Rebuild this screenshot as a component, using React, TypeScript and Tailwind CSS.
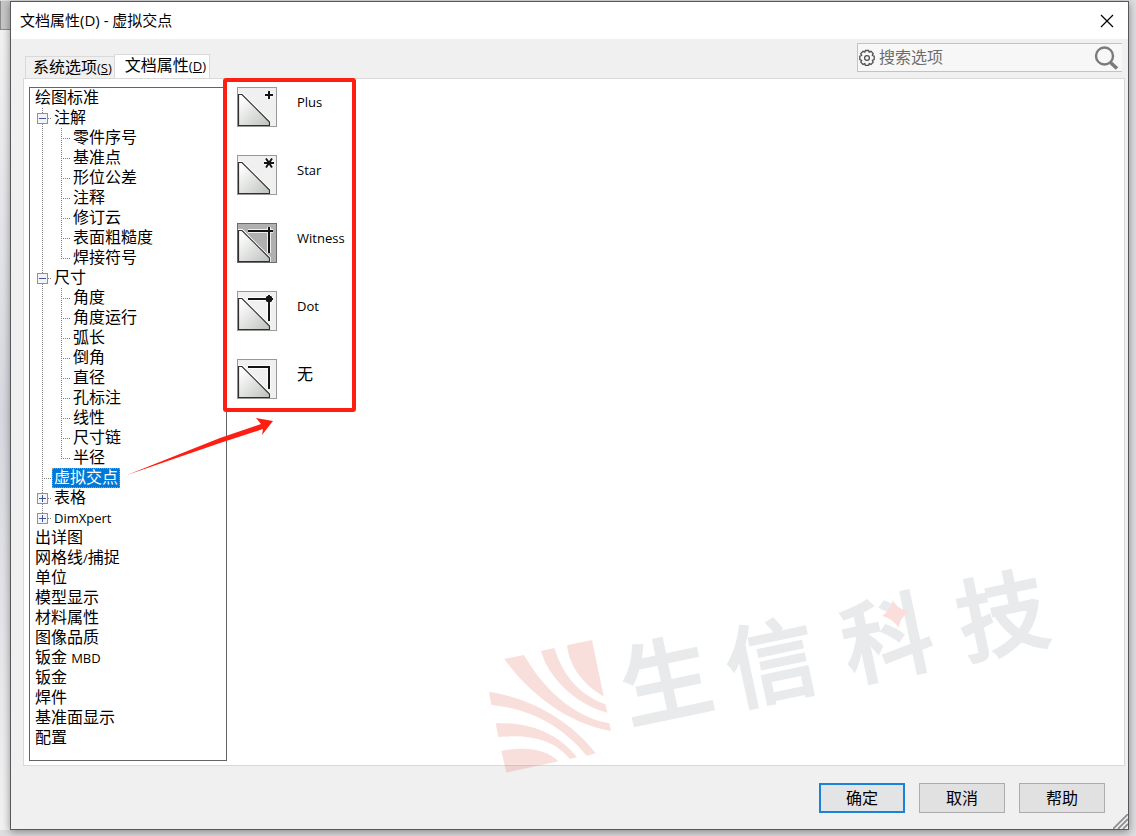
import React, { useState } from 'react';
import { clsx } from 'clsx';

type TreeNode = {
  label: string;
  expanded?: boolean;
  children?: TreeNode[];
};

const ROOT_TOP: TreeNode = { label: '绘图标准' };

const STANDARD_NODES: TreeNode[] = [
  {
    label: '注解',
    expanded: true,
    children: [
      { label: '零件序号' },
      { label: '基准点' },
      { label: '形位公差' },
      { label: '注释' },
      { label: '修订云' },
      { label: '表面粗糙度' },
      { label: '焊接符号' },
    ],
  },
  {
    label: '尺寸',
    expanded: true,
    children: [
      { label: '角度' },
      { label: '角度运行' },
      { label: '弧长' },
      { label: '倒角' },
      { label: '直径' },
      { label: '孔标注' },
      { label: '线性' },
      { label: '尺寸链' },
      { label: '半径' },
    ],
  },
  { label: '虚拟交点' },
  { label: '表格', children: [] },
  { label: 'DimXpert', children: [] },
];

const ROOT_REST = [
  '出详图',
  '网格线/捕捉',
  '单位',
  '模型显示',
  '材料属性',
  '图像品质',
  '钣金 MBD',
  '钣金',
  '焊件',
  '基准面显示',
  '配置',
];

type MarkKind = 'plus' | 'star' | 'witness' | 'dot' | 'none';

const MARKS: { kind: MarkKind; label: string }[] = [
  { kind: 'plus', label: 'Plus' },
  { kind: 'star', label: 'Star' },
  { kind: 'witness', label: 'Witness' },
  { kind: 'dot', label: 'Dot' },
  { kind: 'none', label: '无' },
];

const MARK_PATHS: Record<MarkKind, string> = {
  plus: 'M28 8H36M32 4V12',
  star: 'M27 8H37M29 3.5L35 12.5M35 3.5L29 12.5',
  witness: 'M11 8H36M32 4V30',
  dot: 'M11 8H36M32 4V30',
  none: 'M11 8H32V30',
};

// Latin runs are set smaller than the Chinese text around them
const MixedText = ({ text }: { text: string }) => (
  <>
    {text.split(/([A-Za-z/]+)/).map((part, i) =>
      /[A-Za-z/]/.test(part) ? (
        <span key={i} className="text-[13px]">{part}</span>
      ) : (
        part
      )
    )}
  </>
);

const Guide = ({ branch, last, wide }: { branch: boolean; last?: boolean; wide?: boolean }) => {
  const x = wide ? 12 : 9;
  return (
    <svg
      className={clsx('h-5 shrink-0', wide ? 'w-[22px]' : 'w-[19px]')}
      stroke="#808080"
      strokeDasharray="1 1"
      shapeRendering="crispEdges"
    >
      <path d={`M${x + 0.5} 0V${last ? 11 : 20}`} />
      {branch && <path d={`M${x} 10.5H${x + 9}`} />}
    </svg>
  );
};

const Toggle = ({ open, last, onClick, label }: { open: boolean; last: boolean; onClick: () => void; label: string }) => (
  <button onClick={onClick} aria-label={label} aria-expanded={open} className="h-5 w-[22px] shrink-0">
    <svg className="h-5 w-[22px]" shapeRendering="crispEdges">
      <g stroke="#808080" strokeDasharray="1 1">
        <path d={`M12.5 0V${last ? 11 : 20}`} />
        <path d="M12 10.5H22" />
      </g>
      <rect x="7.5" y="5.5" width="10" height="10" rx="1" fill="#f4f4f4" stroke="#919191" />
      <path d={open ? 'M9 10.5H16' : 'M9 10.5H16M12.5 7V14'} stroke="#3c56a6" />
    </svg>
  </button>
);

type RowLabelProps = {
  label: string;
  selected: boolean;
  onSelect: (label: string) => void;
};

const RowLabel = ({ label, selected, onSelect }: RowLabelProps) => (
  <button
    onClick={() => onSelect(label)}
    className={clsx(
      'flex h-5 items-start px-[2px] leading-[18px] whitespace-pre',
      selected && 'bg-[#0078d7] text-white outline-1 -outline-offset-1 outline-dotted outline-[#d98a3c]'
    )}
  >
    <span>
      <MixedText text={label} />
    </span>
  </button>
);

const OptionTree = () => {
  const [selected, setSelected] = useState('虚拟交点');
  const [nodes, setNodes] = useState(STANDARD_NODES);

  const toggle = (label: string) =>
    setNodes(nodes.map((n) => (n.label === label ? { ...n, expanded: !n.expanded } : n)));

  return (
    <nav className="w-[198px] shrink-0 border border-[#646464] bg-white text-base">
      <ul>
        <li className="flex pl-[3px]">
          <RowLabel label={ROOT_TOP.label} selected={selected === ROOT_TOP.label} onSelect={setSelected} />
        </li>
        {nodes.map((node, i) => {
          const last = i === nodes.length - 1;
          return (
            <li key={node.label}>
              <div className="flex">
                {node.children ? (
                  <Toggle open={!!node.expanded} last={last} label={node.label} onClick={() => toggle(node.label)} />
                ) : (
                  <Guide wide branch last={last} />
                )}
                <RowLabel label={node.label} selected={selected === node.label} onSelect={setSelected} />
              </div>
              {node.expanded && (
                <ul>
                  {node.children?.map((child, j) => (
                    <li key={child.label} className="flex">
                      <Guide wide branch={false} />
                      <Guide branch last={j === node.children!.length - 1} />
                      <RowLabel label={child.label} selected={selected === child.label} onSelect={setSelected} />
                    </li>
                  ))}
                </ul>
              )}
            </li>
          );
        })}
        {ROOT_REST.map((label) => (
          <li key={label} className="flex pl-[3px]">
            <RowLabel label={label} selected={selected === label} onSelect={setSelected} />
          </li>
        ))}
      </ul>
    </nav>
  );
};

const MarkIcon = ({ kind, active }: { kind: MarkKind; active: boolean }) => (
  <svg viewBox="0 0 40 40" className="size-10">
    <defs>
      <linearGradient id={`face-${kind}`} x1="0" y1="0" x2="1" y2="1">
        <stop offset="0.1" stopColor="#ffffff" />
        <stop offset="0.9" stopColor="#c4c8c4" />
      </linearGradient>
    </defs>
    <rect width="40" height="40" fill={active ? '#b0b0b0' : '#f0f0f0'} />
    <path d="M1.5 7.5H5L32.5 35V38.5H1.5Z" fill="none" stroke="#ffffff" strokeWidth="3" />
    <rect x="0.5" y="0.5" width="39" height="39" fill="none" stroke={active ? '#6b6b6b' : '#999999'} />
    <path d="M1.5 7.5H5L32.5 35V38.5H1.5Z" fill={`url(#face-${kind})`} stroke="#303030" strokeWidth="1.2" />
    <path d={MARK_PATHS[kind]} fill="none" stroke="#ffffff" strokeWidth="4" opacity="0.8" />
    <path d={MARK_PATHS[kind]} fill="none" stroke="#141414" strokeWidth="2" />
    {kind === 'star' && <path d="M30 6H34V10H30Z" fill="#141414" />}
    {kind === 'dot' && <path d="M30 5H34L35 6V10L34 11H30L29 10V6Z" fill="#141414" />}
  </svg>
);

const MarkList = () => {
  const [active, setActive] = useState<MarkKind>('witness');

  return (
    <div className="relative ml-[10px] self-start">
      <ul className="flex flex-col gap-7">
        {MARKS.map(({ kind, label }) => (
          <li key={kind} className="flex gap-5">
            <button id={`mark-${kind}`} aria-pressed={active === kind} onClick={() => setActive(kind)} className="size-10">
              <MarkIcon kind={kind} active={active === kind} />
            </button>
            <label
              htmlFor={`mark-${kind}`}
              className={clsx('w-[55px] leading-[30px]', kind === 'none' ? 'text-base' : 'text-[13px]')}
            >
              {label}
            </label>
          </li>
        ))}
      </ul>
      {/* Highlight frame and pointer */}
      <div className="pointer-events-none absolute -top-[9px] -bottom-[13px] -left-[14px] w-[133px] rounded-[3px] border-4 border-[#ff1e12]" />
      <svg viewBox="0 0 150 60" className="pointer-events-none absolute top-full -left-[112px] mt-[17px] h-[60px] w-[150px]" fill="#ff1e12">
        <path d="M2 59L95 22L136 8L131 2L148 5L137 19L138 13L95 27Z" />
      </svg>
    </div>
  );
};

const Watermark = () => (
  <svg
    viewBox="0 0 620 285"
    className="pointer-events-none absolute right-[24px] -bottom-[15px] h-[285px] w-[620px] overflow-visible"
    aria-hidden="true"
  >
    <g transform="translate(0 70)">
      <g fill="#e04632" opacity="0.17" transform="translate(0 -5) scale(0.33333)">
        <path d="M73 297L132 285C180 370 270 470 388 490L393 513C250 490 130 380 73 297Z" />
        <path d="M183 273L223 264C250 350 300 405 376 433L382 458C280 430 205 350 183 273Z" />
        <path d="M261 256L336 240L371 409C310 375 268 320 261 256Z" />
        <path d="M27 395C150 415 270 480 347 580L320 587C250 500 150 445 34 435Z" />
        <path d="M47 490C140 485 230 515 291 592L270 597C220 535 140 522 55 531Z" />
        <path d="M64 573C130 560 195 565 235 604L79 638Z" />
      </g>
      <g
        fill="#e8eaec"
        stroke="#e8eaec"
        strokeWidth="2"
        className="font-['Noto_Sans_CJK_SC',sans-serif] text-[90px] font-medium"
        textAnchor="middle"
        dominantBaseline="central"
      >
        <text transform="translate(185 110) rotate(-12)">生</text>
        <text transform="translate(290 92) rotate(-12)">信</text>
        <text transform="translate(406 68) rotate(-12)">科</text>
        <text transform="translate(521 45) rotate(-12)">技</text>
      </g>
      <path
        d="M398 120C408 138 424 150 448 155C430 166 420 180 416 203C404 186 388 173 366 168C384 156 394 142 398 120Z"
        fill="#fbdedb"
        transform="translate(280 -5) scale(0.33333)"
      />
    </g>
  </svg>
);

const SearchBox = () => (
  <div className="mt-1 mr-[3px] flex h-[29px] w-[265px] items-center border border-r-0 border-[#c3c3c3] bg-[#f7f7f7]">
    <svg viewBox="0 0 18 18" className="size-[18px] shrink-0" fill="none" stroke="#505050" strokeWidth="1.3">
      <path d="M7.4 1.5h3.2l.6 1.7 1.8-.8 2.2 2.2-.8 1.8 1.8.8v3.4l-1.8.8.8 1.8-2.2 2.2-1.8-.8-.6 1.8H7.4l-.6-1.8-1.8.8-2.2-2.2.8-1.8-1.8-.8V7.2l1.8-.8-.8-1.8L5 2.4l1.8.8z" />
      <circle cx="9" cy="9" r="2.4" />
    </svg>
    <input
      type="text"
      aria-label="搜索选项"
      placeholder="搜索选项"
      className="min-w-0 flex-1 bg-transparent px-[3px] pb-[2px] text-base outline-none placeholder:text-[#6d6d6d]"
    />
    <button aria-label="搜索" className="h-full w-8 shrink-0">
      <svg viewBox="0 0 32 27" className="h-[27px] w-8" fill="none" stroke="#7a7a7a">
        <circle cx="14.5" cy="12" r="8.5" strokeWidth="2.4" />
        <path d="M20.5 18.5L27 24.5" strokeWidth="3.6" />
      </svg>
    </button>
  </div>
);

const Tab = ({ label, hotkey, active }: { label: string; hotkey: string; active?: boolean }) => (
  <button
    role="tab"
    aria-selected={!!active}
    className={clsx(
      'border border-[#d9d9d9] text-base whitespace-nowrap',
      active
        ? 'relative -mb-px h-[25px] border-b-0 bg-white pr-[3px] pb-[3px] pl-[10px] leading-5'
        : 'h-[22px] border-r-0 border-b-0 bg-[#f0f0f0] pr-[2px] pl-[7px] leading-5'
    )}
  >
    {label}
    <span className="text-[13px]">
      (<u>{hotkey}</u>)
    </span>
  </button>
);

const DialogButton = ({ label, primary }: { label: string; primary?: boolean }) => (
  <button
    className={clsx(
      'h-[30px] w-[86px] text-base leading-6',
      primary ? 'border-2 border-[#1b82d9] bg-[#e3e4e6]' : 'border border-[#adadad] bg-[#e1e1e1]'
    )}
  >
    {label}
  </button>
);

export default function App() {
  return (
    <div className="flex min-h-screen bg-[#dedee1] pt-px pr-[7px] pb-[6px] font-['Open_Sans','Noto_Sans_CJK_SC',sans-serif] text-black">
      {/* Edge of the window behind */}
      <div className="w-[10px] shrink-0 bg-linear-to-b from-[#f4f4f4] via-[#d8d9e0] to-[#f2f2f2]">
        <div className="h-[29px] border-b border-l border-[#8a8a8a] bg-[#c6c6c6]" />
      </div>

      <div className="relative flex min-w-0 flex-1 flex-col border border-[#58585a] bg-[#f0f0f0] shadow-[0_2px_8px_rgba(0,0,0,0.4)]">
        {/* Title bar */}
        <header className="flex h-[37px] shrink-0 items-center justify-between bg-white pr-[14px] pl-[9px]">
          <h1 className="text-[15px]">文档属性(D) - 虚拟交点</h1>
          <button aria-label="关闭">
            <svg viewBox="0 0 14 14" className="size-[14px]" stroke="#000000" strokeWidth="1.2">
              <path d="M1 1L13 13M13 1L1 13" />
            </svg>
          </button>
        </header>

        <main className="flex flex-1 flex-col pr-[3px] pl-3">
          <div className="flex h-[39px] shrink-0 justify-between">
            <div role="tablist" className="flex items-end pl-[2px]">
              <Tab label="系统选项" hotkey="S" />
              <Tab label="文档属性" hotkey="D" active />
            </div>
            <SearchBox />
          </div>

          <section className="relative flex flex-1 border border-[#d9d9d9] bg-white pt-2 pb-1 pl-[5px]">
            <OptionTree />
            <MarkList />
            <Watermark />
          </section>
        </main>

        <footer className="flex h-[63px] shrink-0 items-center justify-end gap-[14px] pr-[23px]">
          <DialogButton label="确定" primary />
          <DialogButton label="取消" />
          <DialogButton label="帮助" />
        </footer>
        <svg viewBox="0 0 15 15" className="absolute right-0 bottom-0 size-[15px]" stroke="#8f8f8f" strokeWidth="1.8">
          <path d="M0 15L15 0M5 15L15 5M10 15L15 10" />
        </svg>
      </div>
    </div>
  );
}
